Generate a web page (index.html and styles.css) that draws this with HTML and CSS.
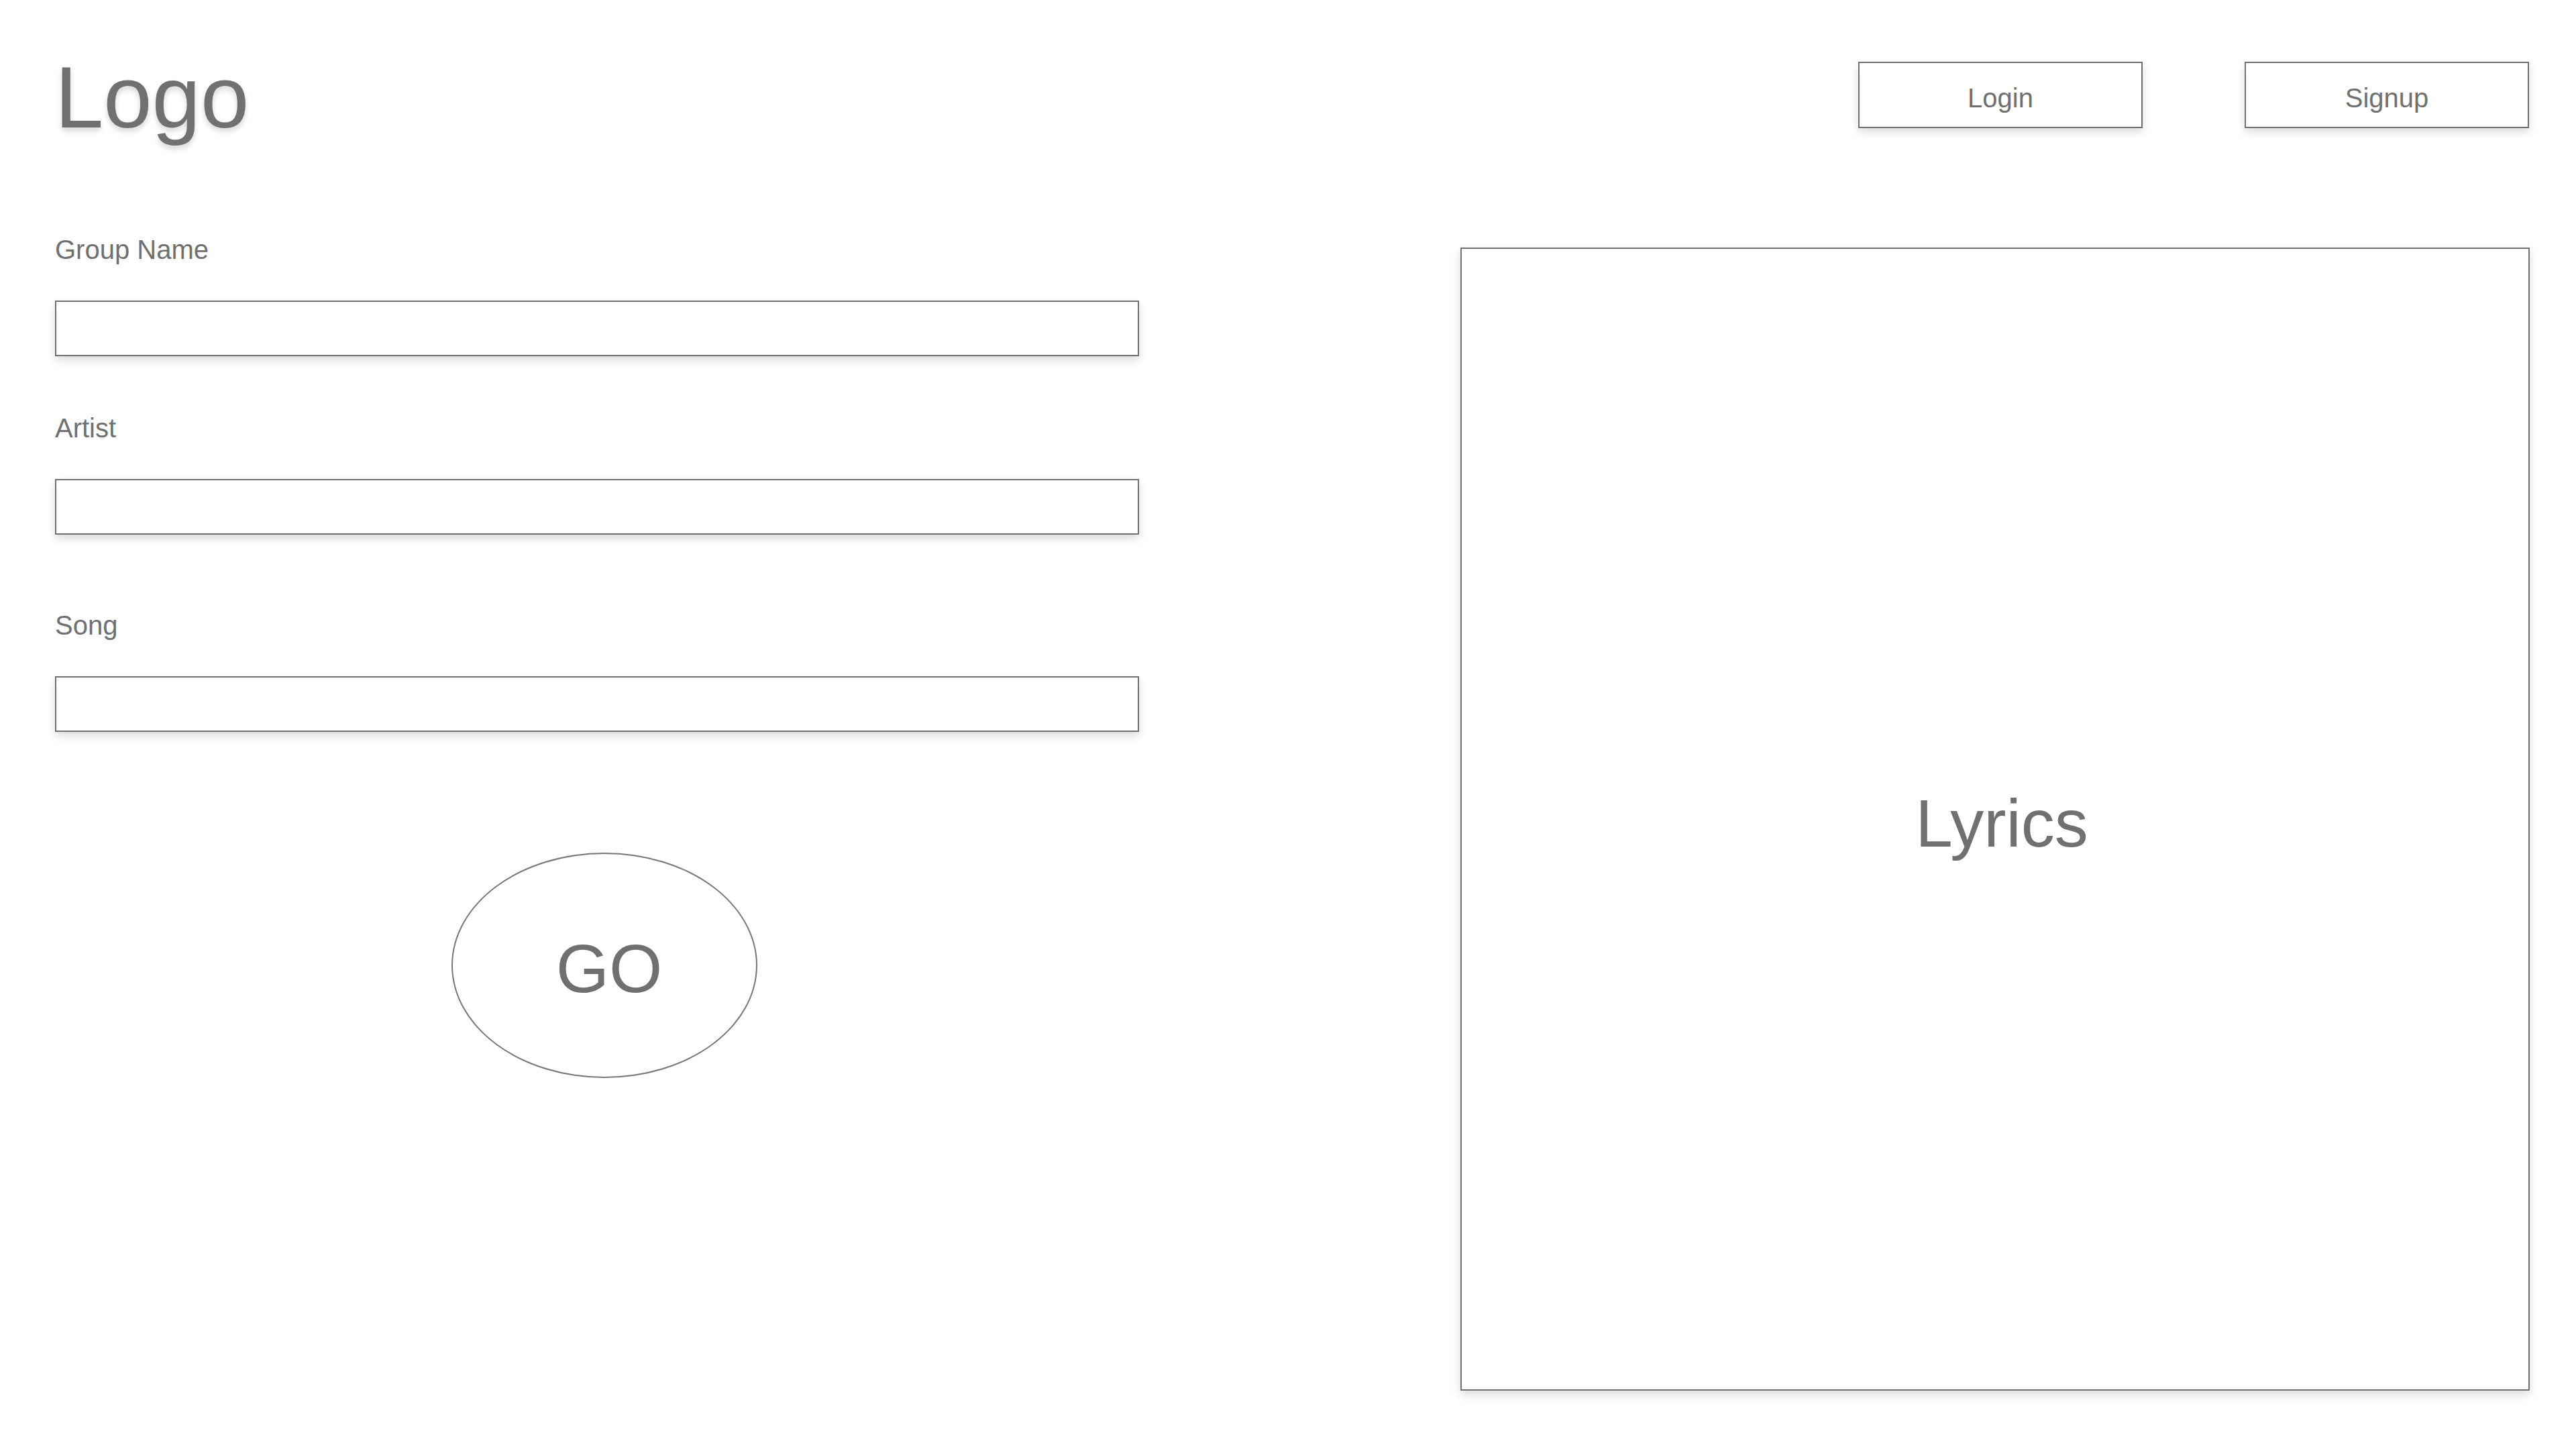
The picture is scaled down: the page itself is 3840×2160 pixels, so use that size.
FILE: index.html
```html
<!DOCTYPE html>
<html lang="en">
<head>
<meta charset="utf-8">
<title>Lyrics Finder</title>
<link rel="stylesheet" href="styles.css">
</head>
<body>
  <header class="header">
    <div class="logo">Logo</div>
    <nav class="nav">
      <button class="nav-btn" type="button">Login</button>
      <button class="nav-btn" type="button">Signup</button>
    </nav>
  </header>
  <main class="main">
    <form class="form">
      <div class="field">
        <label class="field-label" for="group">Group Name</label>
        <input class="field-input" id="group" type="text">
      </div>
      <div class="field field-artist">
        <label class="field-label" for="artist">Artist</label>
        <input class="field-input" id="artist" type="text">
      </div>
      <div class="field field-song">
        <label class="field-label" for="song">Song</label>
        <input class="field-input" id="song" type="text">
      </div>
      <button class="go-btn" type="button">GO</button>
    </form>
    <section class="lyrics">Lyrics</section>
  </main>
</body>
</html>
```
FILE: styles.css
```css
* { box-sizing: border-box; }

html, body {
  margin: 0;
  padding: 0;
  background: #ffffff;
}

body {
  font-family: "Liberation Sans", Arial, Helvetica, sans-serif;
  color: #707070;
  width: 3840px;
  height: 2160px;
  overflow: hidden;
}

.header {
  display: flex;
  justify-content: space-between;
  align-items: flex-start;
  padding: 80px 70px 0 82px;
}

.logo {
  font-size: 130px;
  line-height: 130px;
  height: 130px;
  text-shadow: 0 5px 8px rgba(0, 0, 0, 0.16);
}

.nav {
  display: flex;
  gap: 152px;
  margin-top: 12px;
}

.nav-btn {
  width: 424px;
  height: 99px;
  padding: 9px 0 0 0;
  border: 2px solid #707070;
  background: #ffffff;
  color: #707070;
  font-family: inherit;
  font-size: 40px;
  line-height: 46px;
  display: flex;
  align-items: center;
  justify-content: center;
  box-shadow: 0 6px 12px rgba(0, 0, 0, 0.14);
}

.main {
  display: flex;
  align-items: flex-start;
  margin-top: 139px;
  padding-left: 82px;
}

.form {
  width: 1616px;
  display: flex;
  flex-direction: column;
  margin: 0;
}

.field {
  display: flex;
  flex-direction: column;
  gap: 53px;
}

.field-artist { margin-top: 84px; }
.field-song { margin-top: 112px; }

.field-label {
  font-size: 40px;
  line-height: 46px;
  height: 46px;
}

.field-input {
  width: 100%;
  height: 83px;
  border: 2px solid #707070;
  border-radius: 0;
  background: #ffffff;
  margin: 0;
  padding: 0 16px;
  font-family: inherit;
  font-size: 40px;
  color: #707070;
  box-shadow: 0 6px 12px rgba(0, 0, 0, 0.14);
  outline: none;
}

.go-btn {
  align-self: flex-start;
  margin-top: 180px;
  margin-left: 591px;
  width: 456px;
  height: 336px;
  border: 2px solid #767676;
  border-radius: 50%;
  background: #ffffff;
  color: #707070;
  font-family: inherit;
  font-size: 102px;
  line-height: 117px;
  padding: 11px 0 0 14px;
  display: flex;
  align-items: center;
  justify-content: center;
}

.lyrics {
  margin-left: 479px;
  margin-top: 20px;
  width: 1594px;
  height: 1704px;
  border: 2px solid #707070;
  background: #ffffff;
  box-shadow: 0 6px 14px rgba(0, 0, 0, 0.14);
  display: flex;
  align-items: center;
  justify-content: center;
  padding: 12px 0 0 20px;
  font-size: 100px;
  line-height: 115px;
}
```
